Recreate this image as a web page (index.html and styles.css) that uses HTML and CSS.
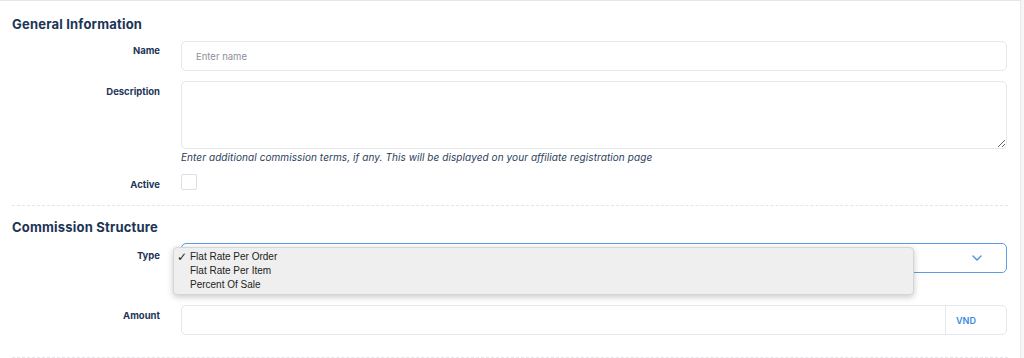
FILE: index.html
```html
<!DOCTYPE html>
<html lang="en">
<head>
    <meta charset="UTF-8">
    <meta name="viewport" content="width=device-width, initial-scale=1.0">
    <title>Commission Plan</title>
    <link rel="stylesheet" href="styles.css">
</head>
<body>
    <div class="card">
        <h2 class="section-title">General Information</h2>

        <div class="form-row">
            <label class="form-label">Name</label>
            <div class="form-control">
                <input class="text-input" type="text" placeholder="Enter name">
            </div>
        </div>

        <div class="form-row">
            <label class="form-label label-desc">Description</label>
            <div class="form-control">
                <textarea class="text-area"></textarea>
                <div class="help-text">Enter additional commission terms, if any. This will be displayed on your affiliate registration page</div>
            </div>
        </div>

        <div class="form-row row-active">
            <label class="form-label label-active">Active</label>
            <div class="form-control">
                <span class="checkbox"></span>
            </div>
        </div>

        <hr class="divider">

        <h2 class="section-title title-second">Commission Structure</h2>

        <div class="form-row">
            <label class="form-label label-type">Type</label>
            <div class="form-control select-wrap">
                <div class="select-box">
                    <svg class="chevron" width="10" height="6" viewBox="0 0 10 6">
                        <path d="M1 1 L5 5 L9 1" fill="none" stroke="#4a90e2" stroke-width="1.4" stroke-linecap="round" stroke-linejoin="round"/>
                    </svg>
                </div>
                <div class="dropdown">
                    <div class="option"><span class="check">&#10003;</span>Flat Rate Per Order</div>
                    <div class="option">Flat Rate Per Item</div>
                    <div class="option">Percent Of Sale</div>
                </div>
            </div>
        </div>

        <div class="form-row row-amount">
            <label class="form-label label-amount">Amount</label>
            <div class="form-control">
                <div class="input-group">
                    <input class="group-input" type="text">
                    <span class="addon">VND</span>
                </div>
            </div>
        </div>

        <hr class="divider divider-bottom">
    </div>
</body>
</html>
```

FILE: styles.css
```css
body {
    margin: 0;
    background-color: #f5f6f8;
    font-family: Inter, "Open Sans", Arial, sans-serif;
    color: #1d3557;
}
.card {
    width: 1021px;
    box-sizing: border-box;
    background-color: #fff;
    border-top: 1px solid #e3e6ea;
    border-right: 1px solid #e6e8eb;
    padding: 15px 12px 0;
    height: 358px;
    overflow: hidden;
}
.section-title {
    margin: 0 0 9px;
    font-size: 13px;
    line-height: 16px;
    font-weight: 700;
    letter-spacing: 0.2px;
    color: #1c3455;
}
.title-second {
    margin-bottom: 8px;
}
.form-row {
    display: flex;
    gap: 21px;
    margin-bottom: 10px;
}
.form-label {
    width: 148px;
    flex: none;
    text-align: right;
    font-size: 9.5px;
    font-weight: 700;
    line-height: 14px;
    padding-top: 3px;
    color: #1d3557;
}
.label-desc {
    padding-top: 4px;
}
.label-active {
    padding-top: 4px;
}
.label-type {
    padding-top: 6px;
}
.label-amount {
    padding-top: 4px;
}
.form-control {
    flex: 1;
    min-width: 0;
    margin-right: 1px;
}
.text-input,
.text-area {
    display: block;
    width: 100%;
    box-sizing: border-box;
    border: 1px solid #e4e6ea;
    border-radius: 5px;
    background: #fff;
    font-family: inherit;
    outline: none;
}
.text-input {
    height: 30px;
    padding: 0 14px;
    font-size: 9.5px;
    color: #333;
}
.text-input::placeholder {
    color: #8c9098;
}
.text-area {
    height: 68px;
    resize: vertical;
    margin: 0;
}
.help-text {
    margin-top: 1px;
    font-size: 10px;
    line-height: 14px;
    letter-spacing: 0.08px;
    font-style: italic;
    color: #2a3e5a;
}
.row-active {
    margin-top: 10px;
}
.checkbox {
    display: block;
    width: 16px;
    height: 16px;
    box-sizing: border-box;
    border: 1px solid #dcdfe3;
    border-radius: 2px;
}
.divider {
    border: 0;
    border-top: 1px dashed #e3e5e8;
    margin: 13px 0 13px;
}
.select-wrap {
    position: relative;
}
.select-box {
    height: 30px;
    box-sizing: border-box;
    border: 1px solid #5b9de6;
    border-radius: 5px;
    display: flex;
    align-items: center;
    justify-content: flex-end;
    padding-right: 24px;
}
.chevron {
    display: block;
}
.dropdown {
    position: absolute;
    left: -8px;
    top: 4px;
    width: 741px;
    height: 48px;
    box-sizing: border-box;
    background-color: #efefef;
    border: 1px solid #d6d6d6;
    border-radius: 4px;
    box-shadow: 0 2px 6px rgba(0, 0, 0, 0.22);
    padding-top: 2px;
    font-family: "Liberation Sans", Arial, sans-serif;
    font-size: 10px;
    color: #222;
}
.option {
    position: relative;
    line-height: 14px;
    padding-left: 16px;
}
.check {
    position: absolute;
    left: 3px;
    top: 0;
    font-size: 12px;
    font-weight: 700;
    font-family: "DejaVu Sans", sans-serif;
}
.row-amount {
    margin-top: 32px;
}
.input-group {
    display: flex;
    height: 30px;
    box-sizing: border-box;
    border: 1px solid #e4e6ea;
    border-radius: 5px;
}
.group-input {
    flex: 1;
    border: 0;
    outline: none;
    background: transparent;
    min-width: 0;
}
.addon {
    width: 61px;
    flex: none;
    box-sizing: border-box;
    border-left: 1px solid #e4e6ea;
    padding-left: 10px;
    display: flex;
    align-items: center;
    font-size: 9px;
    font-weight: 600;
    color: #3a89e0;
}
.divider-bottom {
    margin-top: 22px;
}
```
